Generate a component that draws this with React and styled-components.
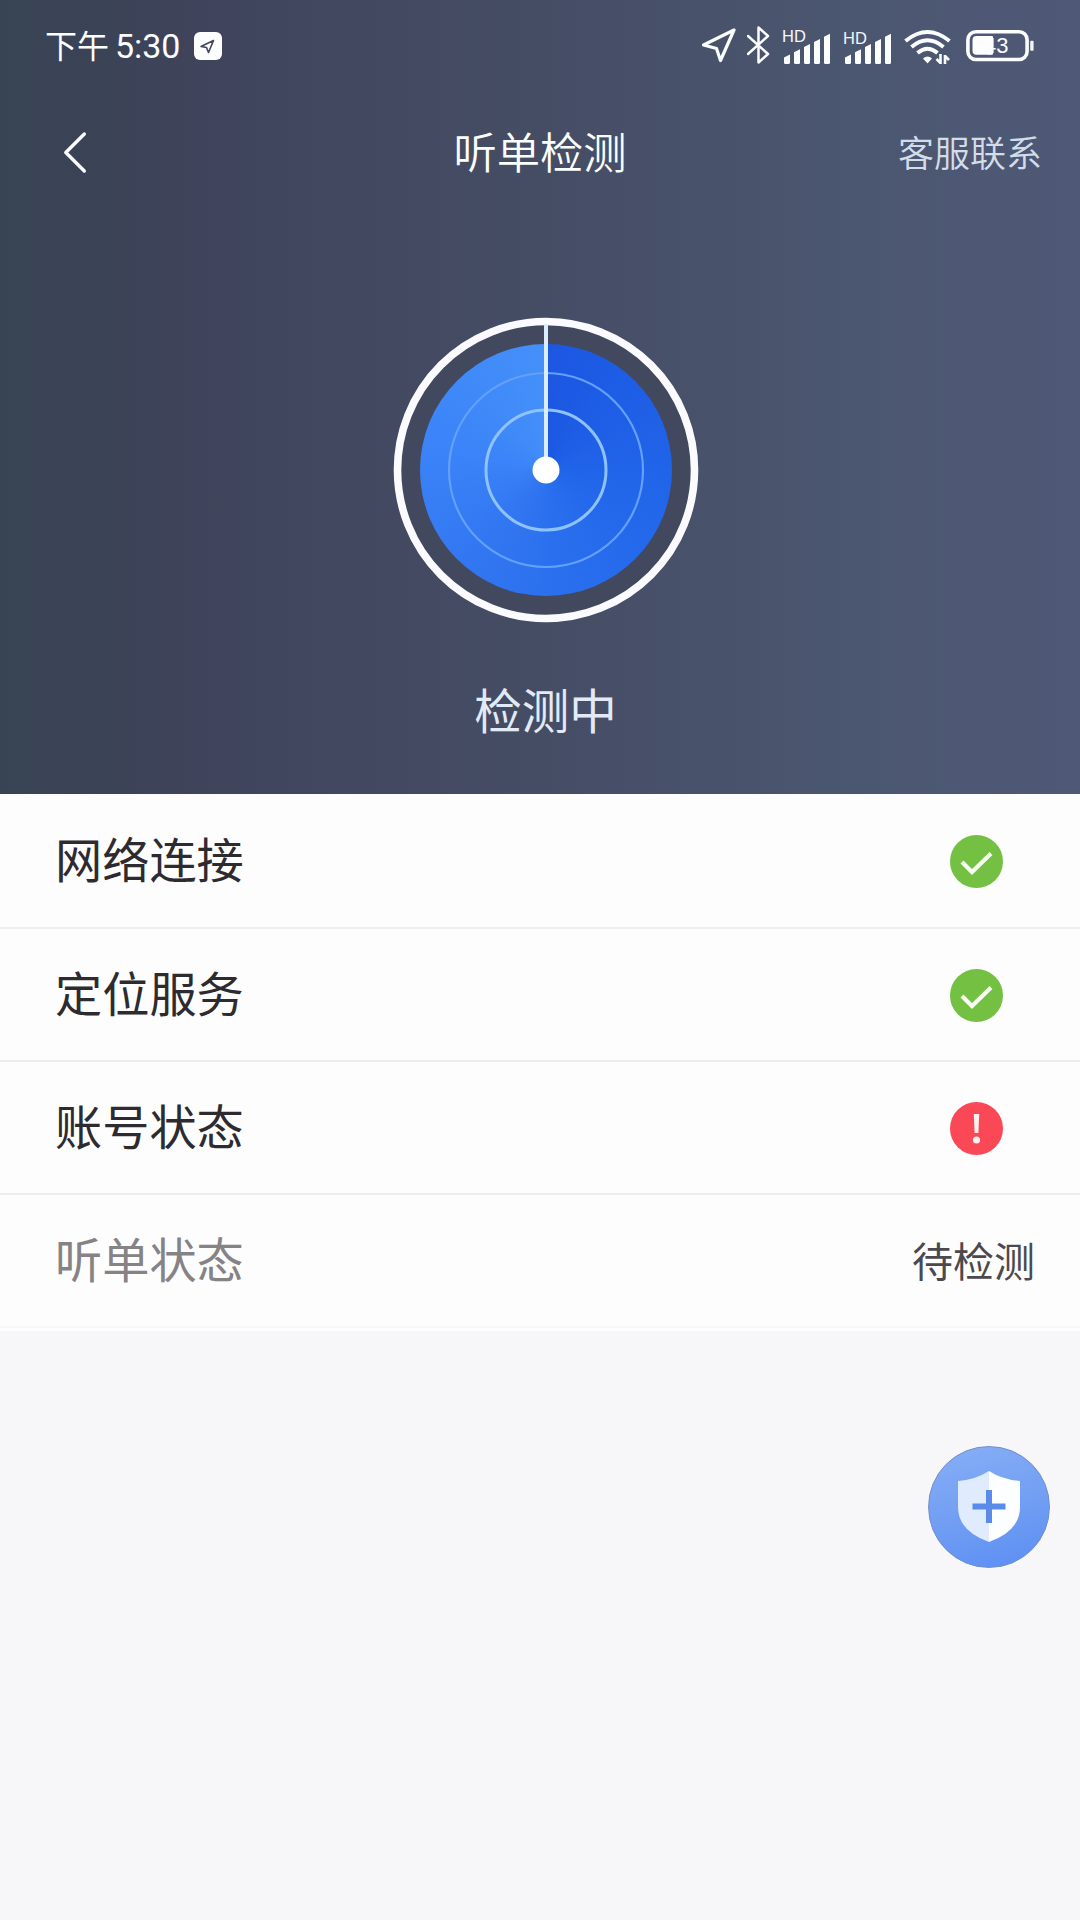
import React from "react";
import styled, { createGlobalStyle } from "styled-components";

const GlobalStyle = createGlobalStyle`
  * { box-sizing: border-box; }
  body {
    margin: 0;
    background: #f7f6f9;
    font-family: "Noto Sans CJK SC", "Noto Sans", sans-serif;
  }
  svg { display: block; flex: none; }
`;

const Screen = styled.div`
  position: relative;
  width: 1080px;
  height: 1920px;
  display: flex;
  flex-direction: column;
  background: #f7f6f9;
  overflow: hidden;
`;

const Hero = styled.header`
  height: 794px;
  display: flex;
  flex-direction: column;
  background: linear-gradient(
    90deg,
    #384454 0,
    #3b4356 100px,
    #3e435a 170px,
    #40465d 270px,
    #434a62 430px,
    #475068 640px,
    #4b5670 850px,
    #4f5977 1080px
  );
`;

const StatusBar = styled.div`
  height: 94px;
  padding: 0 46px 0 45px;
  display: flex;
  align-items: center;
  justify-content: space-between;
  color: #fbfdff;
`;

const Clock = styled.div`
  display: flex;
  align-items: center;
  padding-bottom: 2px;
`;

const Meridiem = styled.span`
  font-size: 32px;
  line-height: 40px;
  padding-bottom: 4px;
`;

const Digits = styled.span`
  margin: 0 14px 0 6px;
  font-family: Roboto, sans-serif;
  font-size: 34px;
  line-height: 40px;
  letter-spacing: -0.1px;
`;

const Indicators = styled.div`
  display: flex;
  align-items: center;
  padding-bottom: 4px;
`;

const Signal = styled.svg`
  margin-left: ${(p) => p.$gap}px;
`;

const NavBar = styled.nav`
  height: 118px;
  padding: 0 38px 0 60px;
  display: grid;
  grid-template-columns: 1fr auto 1fr;
  align-items: center;
`;

const BackButton = styled.button`
  justify-self: start;
  padding: 0 0 1px;
  border: 0;
  background: none;
`;

const Title = styled.h1`
  margin: 0;
  padding: 0 22px 6px 0;
  font-size: 43.3px;
  line-height: 60px;
  font-weight: 350;
  color: #fbfdff;
`;

const SupportLink = styled.span`
  justify-self: end;
  padding-bottom: 4px;
  font-size: 36px;
  line-height: 50px;
  font-weight: 350;
  color: #d3dde8;
`;

const Scanner = styled.section`
  padding: 105px 0 0 11px;
  display: flex;
  flex-direction: column;
  align-items: center;
`;

const Radar = styled.div`
  position: relative;
  width: 306px;
  height: 306px;
  padding: 27px;
  border-radius: 50%;
  background: radial-gradient(circle, #42485d 0 148px, transparent 149px);
`;

const Dial = styled.div`
  width: 252px;
  height: 252px;
  border-radius: 50%;
  background: conic-gradient(
    #1c57e2 0deg,
    #2064e9 90deg,
    #286eed 165deg,
    #3074f0 205deg,
    #3b83f8 280deg,
    #4490fa 360deg
  );
`;

const RadarLines = styled.svg`
  position: absolute;
  inset: 0;
`;

const ScanLabel = styled.p`
  margin: 51px 0 0;
  font-size: 47.5px;
  line-height: 70px;
  color: #e2eaf7;
`;

const CheckList = styled.ul`
  margin: 0;
  padding: 0 0 3px;
  list-style: none;
  background: #fdfdfe;
`;

const CheckRow = styled.li`
  height: ${(p) => (p.$first ? 135 : 133)}px;
  padding: 2px ${(p) => (p.$pending ? 45 : 77)}px 0 55px;
  display: flex;
  align-items: center;
  justify-content: space-between;
  border-bottom: 2px solid ${(p) => (p.$pending ? "#f8f7fa" : "#edecf1")};
`;

const RowLabel = styled.span`
  padding-bottom: 7px;
  font-size: 47.2px;
  line-height: 66px;
  color: ${(p) => (p.$pending ? "#858386" : "#2d2b2f")};
`;

const RowValue = styled.span`
  padding-bottom: 6px;
  font-size: 41px;
  line-height: 60px;
  color: #4b494d;
`;

const SafetyButton = styled.button`
  position: absolute;
  left: 928px;
  top: 1446px;
  width: 122px;
  height: 122px;
  padding: 0;
  border: 1px solid #728fc9;
  border-radius: 50%;
  display: flex;
  align-items: center;
  justify-content: center;
  background: linear-gradient(165deg, #85adf7 5%, #739ff3 50%, #5d90f3 95%);
`;

const BARS = [0, 10, 20, 30, 40];

function CellSignal({ gap, offset }) {
  return (
    <Signal $gap={gap} width="49" height="38" viewBox="0 0 49 38">
      <text x="0" y={16 + offset} fontFamily="Liberation Sans, sans-serif" fontSize="16.5" fill="#f3f7ff">HD</text>
      {BARS.map((x) => {
        const top = 31.5 - x * 0.52;
        return (
          <path
            key={x}
            d={`M${x + 2} ${top}L${x + 8} ${top - 3}V36.5Q${x + 8} 38 ${x + 6.5} 38H${x + 3.5}Q${x + 2} 38 ${x + 2} 36.5Z`}
            fill="#fbfdff"
          />
        );
      })}
    </Signal>
  );
}

function StatusIcons() {
  return (
    <Indicators>
      <Signal $gap={0} width="36" height="38" viewBox="0 0 36 38" fill="none" stroke="#fbfdff" strokeWidth="3.2" strokeLinejoin="round">
        <path d="M32 4L1.5 19L14.5 22.5L18.5 34.5Z" />
      </Signal>
      <Signal $gap={9} width="24" height="38" viewBox="0 0 24 38" fill="none" stroke="#fbfdff" strokeWidth="2.5" strokeLinejoin="round" strokeLinecap="round">
        <path d="M1 10L21 28L11.5 36.5V1.5L21 10L1 28" />
      </Signal>
      <CellSignal gap={11} offset={0} />
      <CellSignal gap={12} offset={2} />
      <Signal $gap={12} width="48" height="38" viewBox="0 0 48 38" fill="none" stroke="#fbfdff" strokeWidth="4">
        <path d="M1.5 15Q23.5 -3 45.5 15" />
        <path d="M7.5 21Q23.5 7.5 39.5 21" />
        <path d="M13.5 27Q23.5 18.5 33.5 27" />
        <path d="M19 32.5Q23.5 28.5 28 32.5L23.5 37.5Z" fill="#fbfdff" stroke="none" />
        <path d="M36.5 28V38M36.5 37L32.5 33M41 38V29M41 30L45 34" strokeWidth="2.6" />
      </Signal>
      <Signal $gap={14} width="68" height="38" viewBox="0 0 68 38">
        <rect x="1.9" y="5.7" width="59.2" height="27.8" rx="8" fill="none" stroke="#fbfdff" strokeWidth="3.6" />
        <rect x="6.5" y="10" width="20.5" height="18.7" rx="4" fill="#fbfdff" />
        <rect x="22" y="10" width="5" height="18.7" rx="1" fill="#fbfdff" />
        <text x="18" y="27" fontFamily="Liberation Sans, sans-serif" fontSize="22" fill="#fbfdff">43</text>
        <rect x="64.2" y="14.8" width="3.4" height="10" rx="1" fill="#f1f5fb" />
      </Signal>
    </Indicators>
  );
}

function StatusMark({ ok }) {
  return (
    <svg width="53" height="53" viewBox="0 0 53 53">
      <circle cx="26.5" cy="26.5" r="26.5" fill={ok ? "#73c042" : "#fb4857"} />
      {ok ? (
        <path d="M12 27L22 37L41 18.5" fill="none" stroke="#f7fdf2" strokeWidth="4.2" />
      ) : (
        <>
          <path d="M23.8 12H29.2L28.4 31H24.6Z" fill="#fff0f0" />
          <circle cx="26.5" cy="38" r="3.6" fill="#fff0f0" />
        </>
      )}
    </svg>
  );
}

const CHECKS = [
  { label: "网络连接", ok: true },
  { label: "定位服务", ok: true },
  { label: "账号状态", ok: false },
  { label: "听单状态", value: "待检测" },
];

export default function App() {
  return (
    <Screen>
      <GlobalStyle />
      <Hero>
        <StatusBar>
          <Clock>
            <Meridiem>下午</Meridiem>
            <Digits>5:30</Digits>
            <svg width="28" height="28" viewBox="0 0 28 28">
              <rect width="28" height="28" rx="6" fill="#fbfdff" />
              <path d="M19.5 8.5L7 14.5L12.5 15.5L14.5 20.5Z" fill="none" stroke="#41465a" strokeWidth="1.6" strokeLinejoin="round" />
            </svg>
          </Clock>
          <StatusIcons />
        </StatusBar>
        <NavBar>
          <BackButton aria-label="返回">
            <svg width="30" height="44" viewBox="0 0 30 44" fill="none" stroke="#fbfdff" strokeWidth="3.4" strokeLinecap="round" strokeLinejoin="round">
              <path d="M24.3 3L5.8 21.5L24.3 40" />
            </svg>
          </BackButton>
          <Title>听单检测</Title>
          <SupportLink>客服联系</SupportLink>
        </NavBar>
        <Scanner>
          <Radar>
            <Dial />
            <RadarLines width="306" height="306" viewBox="0 0 306 306" fill="none">
              <circle cx="153" cy="153" r="148.5" stroke="#fbfbff" strokeWidth="7.6" />
              <circle cx="153" cy="153" r="97" stroke="#639ffb" strokeWidth="2.2" />
              <circle cx="153" cy="153" r="60" stroke="#8fc3ff" strokeWidth="3" />
              <path d="M153 7V153" stroke="#dcecff" strokeWidth="4" />
              <circle cx="153" cy="153" r="13.5" fill="#fff" />
            </RadarLines>
          </Radar>
          <ScanLabel>检测中</ScanLabel>
        </Scanner>
      </Hero>
      <CheckList>
        {CHECKS.map((c, i) => (
          <CheckRow key={c.label} $first={i === 0} $pending={!!c.value}>
            <RowLabel $pending={!!c.value}>{c.label}</RowLabel>
            {c.value ? <RowValue>{c.value}</RowValue> : <StatusMark ok={c.ok} />}
          </CheckRow>
        ))}
      </CheckList>
      <SafetyButton aria-label="安全中心">
        <svg width="64" height="72" viewBox="0 0 64 72">
          <path d="M32 0Q19 8.5 1 10V36Q1 60 32 71Z" fill="#e0ebfd" />
          <path d="M32 0Q45 8.5 63 10V36Q63 60 32 71Z" fill="#fdfeff" />
          <path d="M32 19V52M15.5 35.5H48.5" stroke="#5a8bea" strokeWidth="6" />
        </svg>
      </SafetyButton>
    </Screen>
  );
}
